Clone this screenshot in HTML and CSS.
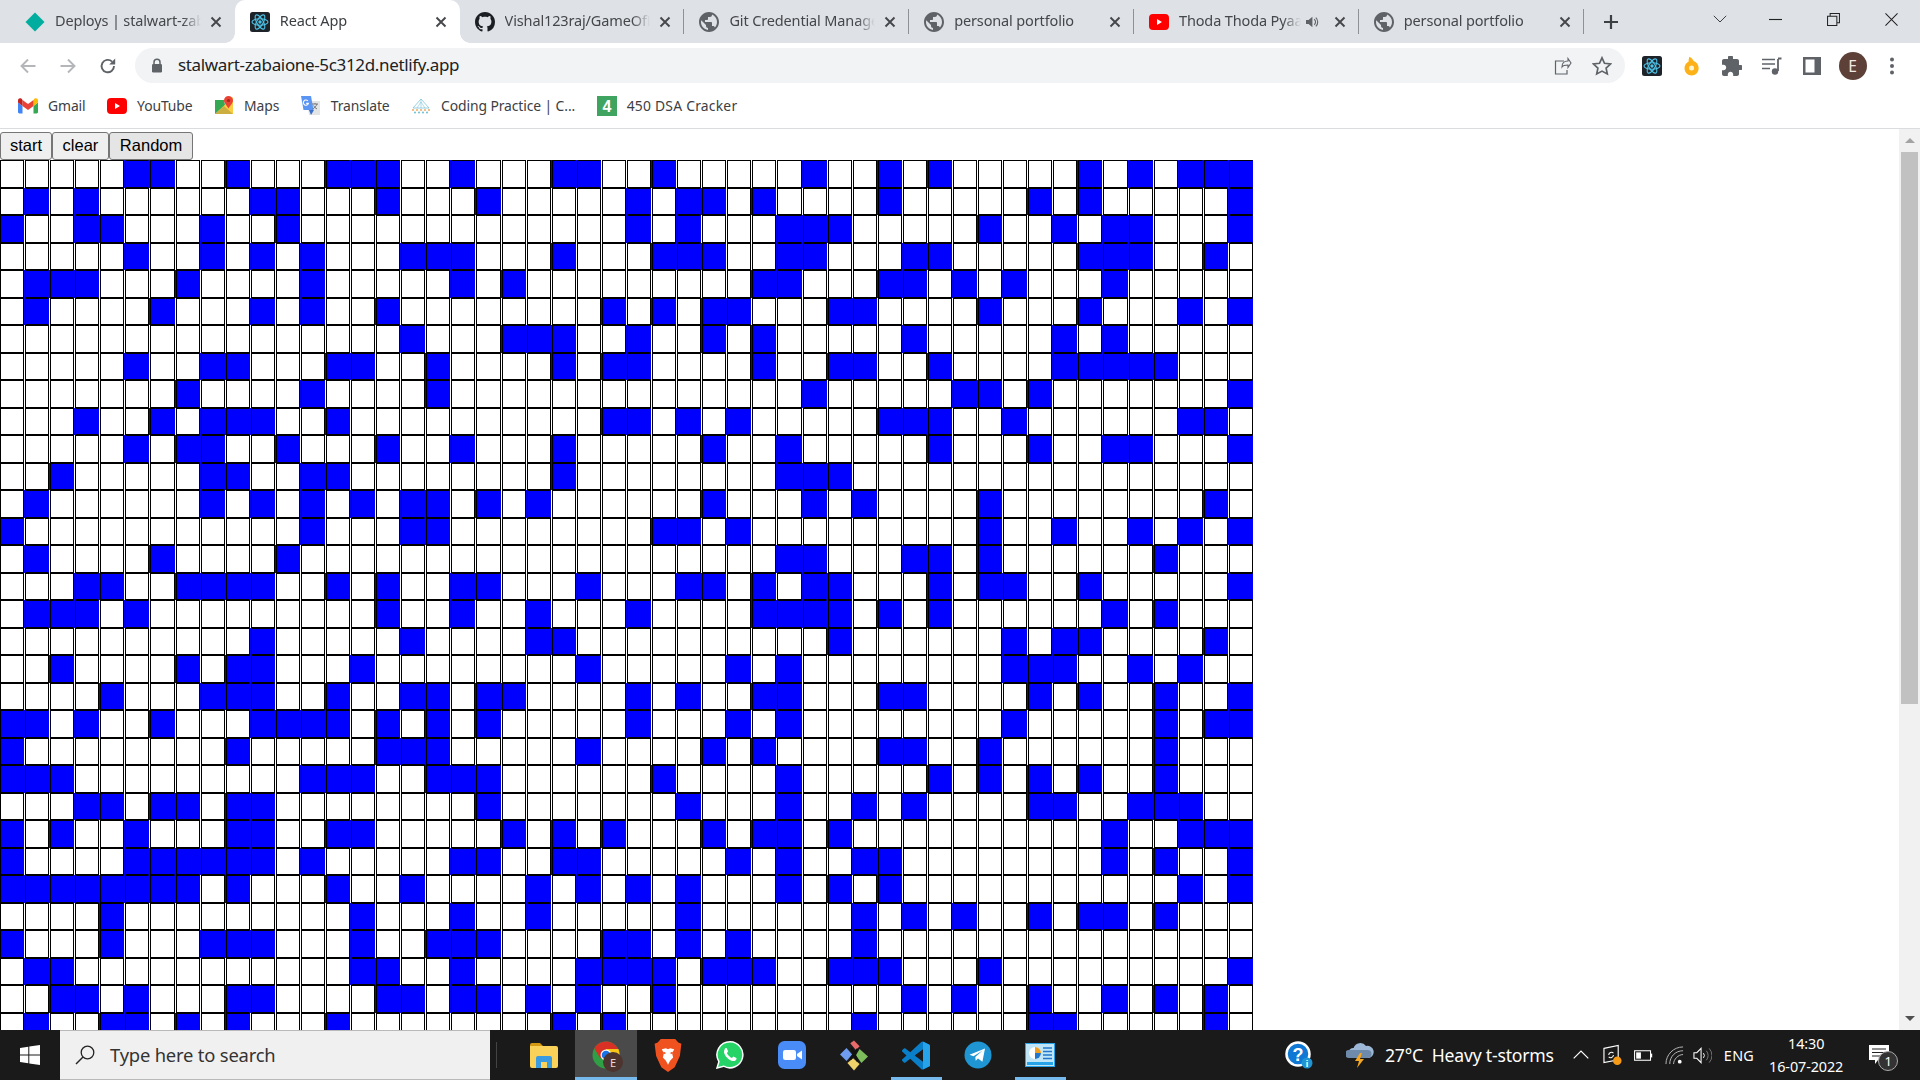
FILE: index.html
```html
<!DOCTYPE html>
<html lang="en">
<head>
<meta charset="utf-8">
<title>React App</title>
<link rel="stylesheet" href="styles.css">
</head>
<body>
<svg class="defs" aria-hidden="true">
  <symbol id="i-close" viewBox="0 0 12 12"><path d="M1.5 1.5l9 9M10.5 1.5l-9 9" fill="none" stroke="currentColor" stroke-width="1.9"/></symbol>
  <symbol id="i-globe" viewBox="2 2 20 20"><path fill="#5f6368" d="M12 2C6.48 2 2 6.48 2 12s4.48 10 10 10 10-4.48 10-10S17.52 2 12 2zm-1 17.93c-3.95-.49-7-3.85-7-7.93 0-.62.08-1.21.21-1.79L9 15v1c0 1.1.9 2 2 2v1.93zm6.9-2.54c-.26-.81-1-1.39-1.9-1.39h-1v-3c0-.55-.45-1-1-1H8v-2h2c.55 0 1-.45 1-1V7h2c1.1 0 2-.9 2-2v-.41c2.93 1.19 5 4.06 5 7.41 0 2.08-.8 3.97-2.1 5.39z"/></symbol>
  <symbol id="i-yt" viewBox="0 0 20 16"><rect width="20" height="16" rx="4" fill="#f00"/><path d="M8 5l5 3-5 3z" fill="#fff"/></symbol>
  <symbol id="i-react" viewBox="0 0 20 20"><rect width="20" height="20" rx="2.5" fill="#1d2329"/><g fill="none" stroke="#4fc3e8" stroke-width="1.1"><ellipse cx="10" cy="10" rx="8" ry="3.2"/><ellipse cx="10" cy="10" rx="8" ry="3.2" transform="rotate(60 10 10)"/><ellipse cx="10" cy="10" rx="8" ry="3.2" transform="rotate(120 10 10)"/></g><circle cx="10" cy="10" r="1.7" fill="#4fc3e8"/></symbol>
</svg>

<div class="tabstrip">
  <div class="tab no-sep">
    <svg class="fav" viewBox="0 0 20 20"><path d="M10 .5L19.5 10 10 19.5.5 10z" fill="#00ad9f"/></svg>
    <span class="tab-title">Deploys | stalwart-zabaione-5c312d</span>
    <svg class="tab-x"><use href="#i-close"/></svg>
  </div>
  <div class="tab active no-sep">
    <svg class="fav"><use href="#i-react"/></svg>
    <span class="tab-title">React App</span>
    <svg class="tab-x"><use href="#i-close"/></svg>
  </div>
  <div class="tab">
    <svg class="fav" viewBox="0 0 16 16"><path fill="#1b1f23" d="M8 0C3.58 0 0 3.58 0 8c0 3.54 2.29 6.53 5.47 7.59.4.07.55-.17.55-.38 0-.19-.01-.82-.01-1.49-2.01.37-2.53-.49-2.69-.94-.09-.23-.48-.94-.82-1.13-.28-.15-.68-.52-.01-.53.63-.01 1.08.58 1.23.82.72 1.21 1.87.87 2.33.66.07-.52.28-.87.51-1.07-1.78-.2-3.64-.89-3.64-3.95 0-.87.31-1.59.82-2.15-.08-.2-.36-1.02.08-2.12 0 0 .67-.21 2.2.82.64-.18 1.32-.27 2-.27.68 0 1.36.09 2 .27 1.53-1.04 2.2-.82 2.2-.82.44 1.1.16 1.92.08 2.12.51.56.82 1.27.82 2.15 0 3.07-1.87 3.75-3.65 3.95.29.25.54.73.54 1.48 0 1.07-.01 1.93-.01 2.2 0 .21.15.46.55.38A8.013 8.013 0 0016 8c0-4.42-3.58-8-8-8z"/></svg>
    <span class="tab-title">Vishal123raj/GameOfLife</span>
    <svg class="tab-x"><use href="#i-close"/></svg>
  </div>
  <div class="tab">
    <svg class="fav"><use href="#i-globe"/></svg>
    <span class="tab-title">Git Credential Manager for Windows</span>
    <svg class="tab-x"><use href="#i-close"/></svg>
  </div>
  <div class="tab">
    <svg class="fav"><use href="#i-globe"/></svg>
    <span class="tab-title">personal portfolio</span>
    <svg class="tab-x"><use href="#i-close"/></svg>
  </div>
  <div class="tab">
    <svg class="fav"><use href="#i-yt"/></svg>
    <span class="tab-title audio-title">Thoda Thoda Pyaar</span>
    <svg class="tab-audio" viewBox="0 0 14 14"><path d="M1 5h2.6L7.4 1.8v10.4L3.6 9H1z" fill="#5f6368"/><path d="M9.2 4.2a3.6 3.6 0 010 5.6M10.8 2.6a6 6 0 010 8.8" fill="none" stroke="#5f6368" stroke-width="1.1"/></svg>
    <svg class="tab-x"><use href="#i-close"/></svg>
  </div>
  <div class="tab">
    <svg class="fav"><use href="#i-globe"/></svg>
    <span class="tab-title">personal portfolio</span>
    <svg class="tab-x"><use href="#i-close"/></svg>
  </div>
  <svg class="new-tab" viewBox="0 0 16 16"><path d="M8 1v14M1 8h14" stroke="#3c4043" stroke-width="2.2" fill="none"/></svg>
  <div class="tabstrip-fill"></div>
  <svg class="tab-search" viewBox="0 0 14 8"><path d="M.8.8L7 7l6.2-6.2" fill="none" stroke="#3c4043" stroke-width="1"/></svg>
  <div class="win-btn"><svg viewBox="0 0 14 14"><path d="M0 7h14" stroke="#222" stroke-width="1.2"/></svg></div>
  <div class="win-btn"><svg viewBox="0 0 14 14"><path d="M.6 3.4h10v10H.6zM3.4 3.2V.6h10v10h-2.8" fill="none" stroke="#222" stroke-width="1.1"/></svg></div>
  <div class="win-btn"><svg viewBox="0 0 14 14"><path d="M.5.5l13 13M13.5.5l-13 13" stroke="#222" stroke-width="1.1"/></svg></div>
</div>

<div class="toolbar">
  <div class="tool"><svg viewBox="0 0 18 18"><path d="M16.5 9H2.5M9 2.5L2.5 9 9 15.5" fill="none" stroke="#b4b6b9" stroke-width="1.9"/></svg></div>
  <div class="tool"><svg viewBox="0 0 18 18"><path d="M1.5 9h14M9 2.5L15.5 9 9 15.5" fill="none" stroke="#b4b6b9" stroke-width="1.9"/></svg></div>
  <div class="tool"><svg viewBox="0 0 18 18"><path d="M15 9a6.2 6.2 0 11-1.9-4.4" fill="none" stroke="#5f6368" stroke-width="1.9"/><path d="M16.2 1.4v6h-6z" fill="#5f6368"/></svg></div>
  <div class="omnibox">
    <svg class="lock" viewBox="0 0 12 15"><path d="M3 6V4.2a3 3 0 016 0V6" fill="none" stroke="#5f6368" stroke-width="1.5"/><rect x="1" y="6" width="10" height="8.5" rx="1.2" fill="#5f6368"/></svg>
    <span class="url">stalwart-zabaione-5c312d.netlify.app</span>
    <svg class="omni-icon share" viewBox="0 0 20 20"><path d="M10 11c0-4 2.500-6 6-6V2.500L19 7l-3 4.500V9c-3 0-5 .5-6 2z" fill="none" stroke="#5f6368" stroke-width="1.1"/><path d="M12 5H3.500v13H15v-4" fill="none" stroke="#5f6368" stroke-width="1.2"/></svg>
    <svg class="omni-icon" viewBox="0 0 20 20"><path d="M10 1.800l2.500 5.500 6 .7-4.400 4.100 1.200 5.900L10 15.100 4.700 18l1.200-5.900L1.500 8l6-.7z" fill="none" stroke="#5f6368" stroke-width="1.700"/></svg>
  </div>
  <div class="tool first-ext"><svg class="ext" viewBox="0 0 20 20"><use href="#i-react"/></svg></div>
  <div class="tool"><svg class="ext" viewBox="0 0 20 24"><path d="M7 1c2 1 4 3 5 5 3 1 6 4 6 9a8.500 8.500 0 01-17 0c0-4 2-7 5-8.500C6 5 6 3 7 1z" fill="#fbb117"/><circle cx="9.500" cy="14.500" r="3" fill="#fff3d0"/></svg></div>
  <div class="tool"><svg class="ext" viewBox="2 2 20 20"><path fill="#5f6368" d="M20.500 11H19V7c0-1.100-.9-2-2-2h-4V3.500a2.500 2.500 0 00-5 0V5H4c-1.100 0-2 .9-2 2v3.800h1.500c1.500 0 2.700 1.200 2.700 2.700S5 16.200 3.500 16.200H2V20c0 1.100.9 2 2 2h3.800v-1.500c0-1.500 1.200-2.700 2.700-2.700s2.700 1.200 2.700 2.700V22H17c1.100 0 2-.9 2-2v-4h1.500a2.500 2.500 0 000-5z"/></svg></div>
  <div class="tool"><svg class="ext" viewBox="0 0 20 20"><path d="M0 3.500h13M0 8h13M0 12.500h8" stroke="#5f6368" stroke-width="1.700"/><path d="M16 3v12" stroke="#5f6368" stroke-width="1.800"/><path d="M16 2.500h3.500" stroke="#5f6368" stroke-width="2"/><circle cx="13" cy="15.500" r="3.200" fill="#5f6368"/></svg></div>
  <div class="tool"><svg class="ext" viewBox="0 0 20 20"><path d="M1 1h18v18H1zM3.500 3.500v13h9v-13z" fill="#5f6368" fill-rule="evenodd"/></svg></div>
  <div class="tool"><span class="avatar">E</span></div>
  <div class="tool"><svg class="ext" viewBox="0 0 20 20"><circle cx="10" cy="3.500" r="2" fill="#5f6368"/><circle cx="10" cy="10" r="2" fill="#5f6368"/><circle cx="10" cy="16.500" r="2" fill="#5f6368"/></svg></div>
</div>

<div class="bookmarks">
  <div class="bm">
    <svg class="bm-ico" viewBox="0 0 20 16"><path d="M1.400 15.500h3.100V8L0 4.600v9.500c0 .8.600 1.400 1.400 1.400z" fill="#4285f4"/><path d="M15.500 15.500h3.100c.8 0 1.400-.6 1.400-1.400V4.600L15.500 8z" fill="#34a853"/><path d="M15.500 2v6L20 4.600V2.300c0-1.800-2-2.800-3.400-1.700z" fill="#fbbc04"/><path d="M4.500 8V2L10 6.100 15.500 2v6L10 12z" fill="#ea4335"/><path d="M0 2.300v2.300L4.500 8V2L3.400.6C2 -.5 0 .5 0 2.300z" fill="#c5221f"/></svg>
    <span>Gmail</span>
  </div>
  <div class="bm">
    <svg class="bm-ico"><use href="#i-yt"/></svg>
    <span>YouTube</span>
  </div>
  <div class="bm">
    <svg class="bm-ico tall" viewBox="0 0 20 20"><path d="M1 4l9 0 1 5-10 9z" fill="#34a853"/><path d="M1 18l9-8 9 8z" fill="#4285f4"/><path d="M1 18L19 1v17z" fill="#fbbc04" opacity=".75"/><path d="M14.500 0a4.500 4.500 0 014.500 4.500c0 3-3.200 5-4.500 8-1.300-3-4.500-5-4.500-8A4.500 4.500 0 0114.500 0z" fill="#ea4335"/><circle cx="14.500" cy="4.500" r="1.600" fill="#a52714"/></svg>
    <span>Maps</span>
  </div>
  <div class="bm">
    <svg class="bm-ico tall" viewBox="0 0 20 20"><path d="M6 5h13v14H8z" fill="#e2e4e6"/><path d="M1 0h10l2.500 14H3.500z" fill="#5a95f3" transform="translate(-1 0)"/><path d="M11 8h6M14 7v1M16 8c-.5 2-2.500 4-4.500 5M12.500 9.500c.8 1.500 2 2.800 3.500 3.500" fill="none" stroke="#6b6e72" stroke-width=".9"/><path d="M6.800 4.800a2.600 2.600 0 10.600 2.600H5.200" fill="none" stroke="#fff" stroke-width="1.100"/><path d="M8 14l2 5 3-5z" fill="#3a6fc9"/></svg>
    <span>Translate</span>
  </div>
  <div class="bm">
    <svg class="bm-ico" viewBox="0 0 20 16"><path d="M10 1L2 10h16z" fill="none" stroke="#7cc4d8" stroke-width=".8"/><path d="M10 4L6 10M10 4l4 6M10 1v9" stroke="#7cc4d8" stroke-width=".6"/><g fill="#f0a860"><circle cx="2" cy="12" r="1"/><circle cx="6" cy="12" r="1"/><circle cx="10" cy="12" r="1"/><circle cx="14" cy="12" r="1"/><circle cx="18" cy="12" r="1"/></g><g fill="#5bb8d0"><circle cx="4" cy="14.500" r=".9"/><circle cx="8" cy="14.500" r=".9"/><circle cx="12" cy="14.500" r=".9"/><circle cx="16" cy="14.500" r=".9"/></g></svg>
    <span>Coding Practice | C...</span>
  </div>
  <div class="bm bm-last">
    <svg class="bm-ico tall" viewBox="0 0 20 20"><rect width="20" height="20" fill="#3fa45f"/><text x="10" y="16" class="four">4</text></svg>
    <span>450 DSA Cracker</span>
  </div>
</div>

<div class="viewport">
  <main class="page">
    <div class="controls">
      <button class="btn">start</button><button class="btn">clear</button><button class="btn hover">Random</button>
    </div>
    <div class="grid" id="grid"></div>
  </main>
  <aside class="scrollbar">
    <svg class="arrow" viewBox="0 0 10 5"><path d="M5 0l5 5H0z" fill="#a3a3a3"/></svg>
    <div class="thumb"></div>
    <div class="track-fill"></div>
    <svg class="arrow" viewBox="0 0 10 5"><path d="M0 0h10L5 5z" fill="#505050"/></svg>
  </aside>
</div>

<footer class="taskbar">
  <div class="start">
    <svg viewBox="0 0 20 20"><path d="M0 2.900l8.300-1.200v7.700H0zM9.300 1.500L20 0v9.400H9.300zM0 10.500h8.300v7.800L0 17.100zM9.300 10.500H20V20L9.300 18.500z" fill="#fff"/></svg>
  </div>
  <div class="search">
    <svg viewBox="0 0 20 20"><circle cx="12.500" cy="7.500" r="6.300" fill="none" stroke="#222" stroke-width="1.300"/><path d="M8 12L1 19" stroke="#222" stroke-width="1.500"/></svg>
    <span>Type here to search</span>
  </div>
  <div class="task-sep"></div>
  <div class="slot">
    <svg class="app" viewBox="0 0 28 26"><path d="M0 3a2 2 0 012-2h8l3 3h-13z" fill="#d59a12"/><path d="M0 4h26a2 2 0 012 2v18a2 2 0 01-2 2H2a2 2 0 01-2-2z" fill="#fbd259"/><path d="M6 26V16a2 2 0 012-2h12a2 2 0 012 2v10h-5v-6h-6v6z" fill="#3a9be0"/></svg>
  </div>
  <div class="slot running">
    <svg class="app" viewBox="0 0 28 28"><circle cx="14" cy="14" r="13.500" fill="#2f9e44"/><path d="M14 .5A13.500 13.500 0 002.300 7.300L8 17l6-3h13.500A13.500 13.500 0 0014 .5z" fill="#d93025"/><path d="M14 8h12.400a13.500 13.500 0 011.100 6c0 5-2.700 9.400-6.800 11.700L14 14z" fill="#f5c518"/><circle cx="14" cy="14" r="5.500" fill="#fff"/><circle cx="14" cy="14" r="4.300" fill="#1a73e8"/></svg>
    <span class="badge">E</span>
  </div>
  <div class="slot">
    <svg class="app tall" viewBox="0 0 26 32"><path d="M6 0h14l3 3.500 3 1-1.500 12-5 11L13 32l-6.500-4.500-5-11L0 4.500l3-1z" fill="#f0521f"/><path d="M7 10l4-1 2 1 2-1 4 1-2 4 1 4-3 3-2 4-2-4-3-3 1-4z" fill="#fff"/><path d="M10.500 14l-2-1M15.500 14l2-1" stroke="#f0521f" stroke-width="1.500"/></svg>
  </div>
  <div class="slot">
    <svg class="app" viewBox="0 0 28 28"><path d="M14 .8A13 13 0 002.900 20.600L1 27l6.600-1.800A13 13 0 1014 .8z" fill="#25d366" stroke="#fff" stroke-width="1.500"/><path d="M9.500 7.500c-1.500 1-2 3-1 5.500 1.300 3 4 5.700 7 6.800 2.300.8 4 0 4.800-1.400.3-.6.300-1.300.1-1.500l-3-1.500-1.500 1.600c-2-.7-4-2.700-5-5l1.300-1.400-1.300-3.200c-.5-.5-1.700-.5-2.400.1z" fill="#fff"/></svg>
  </div>
  <div class="slot">
    <svg class="app" viewBox="0 0 28 28"><rect width="28" height="28" rx="6.500" fill="#4a8cf7"/><rect x="5" y="9" width="13" height="10" rx="2.200" fill="#fff"/><path d="M19 13l5-3.500v9L19 15z" fill="#fff"/></svg>
  </div>
  <div class="slot">
    <svg class="app tall" viewBox="0 0 30 32"><path d="M11 3l4-3 6 6-4 4z" fill="#e96a6a"/><path d="M0 15l7-7 6 7-6 7z" fill="#6f9cf0"/><path d="M21 9l9 8-7 7-6-8z" fill="#7dbd5c"/><path d="M8 24l6-5 7 6-6 7z" fill="#f0d36a"/><path d="M12 8l7 14M19 9l-8 11" stroke="#111" stroke-width="2.600"/></svg>
  </div>
  <div class="slot running narrow">
    <svg class="app tall" viewBox="0 0 24 24"><path fill="#0a7fc9" d="M23.150 2.587L18.210.21a1.494 1.494 0 00-1.705.29l-9.460 8.630-4.120-3.128a.999.999 0 00-1.276.057L.327 7.261A1 1 0 00.326 8.740L3.899 12 .326 15.260a1 1 0 00.001 1.479L1.650 17.940a.999.999 0 001.276.057l4.120-3.128 9.460 8.630a1.492 1.492 0 001.704.29l4.942-2.377A1.500 1.500 0 0024 20.060V3.939a1.500 1.500 0 00-.85-1.352zm-5.146 14.861L10.826 12l7.178-5.448v10.896z"/><path fill="#27a3ea" d="M18 .1l5.150 2.487A1.500 1.500 0 0124 3.939V20.060a1.500 1.500 0 01-.85 1.352L18 23.900z"/></svg>
  </div>
  <div class="slot">
    <svg class="app" viewBox="0 0 28 28"><circle cx="14" cy="14" r="13.500" fill="#1f96d3"/><path d="M5.500 13.800l15.500-6.300-2.600 13.300-4.400-3.200-2.300 2.100-.4-3.700 7-6.200-8.800 5.400z" fill="#fff"/></svg>
  </div>
  <div class="slot running narrow cpanel">
    <svg class="app wide" viewBox="0 0 30 24"><rect x=".5" y=".5" width="29" height="23" fill="#bfe5f7" stroke="#27a3ea"/><rect x="2" y="19" width="26" height="3" fill="#27a3ea"/><circle cx="10" cy="10" r="6" fill="#fff"/><path d="M10 10V4a6 6 0 016 6z" fill="#f0a020"/><path d="M10 10h6a6 6 0 01-6 6z" fill="#2277cc"/><path d="M18 5h9M18 8.500h9M18 12h9M18 15.500h9" stroke="#2277cc" stroke-width="1.300"/></svg>
  </div>
  <div class="tray">
    <svg class="help" viewBox="0 0 28 28"><circle cx="13" cy="13" r="11.500" fill="#0f78d4" stroke="#fff" stroke-width="2.500"/><text x="13" y="20" class="help-q">?</text><circle cx="22" cy="22" r="5.500" fill="#1f96d3"/><text x="22" y="25.500" class="help-i">i</text></svg>
    <svg class="weather" viewBox="0 0 28 28"><path d="M7 17a5 5 0 01.600-10A7 7 0 0120 5a6 6 0 013 12z" fill="#9db8d6"/><path d="M3 17a4 4 0 01.500-8h18a4 4 0 010 8z" fill="#6f8bac"/><path d="M14 12l-5 8h4l-2 7 7-9h-4l2-6z" fill="#f5a623"/></svg>
    <span class="weather-text">27°C&nbsp; Heavy t-storms</span>
    <svg class="caret" viewBox="0 0 16 9"><path d="M.7 8.300L8 1l7.300 7.300" fill="none" stroke="#fff" stroke-width="1.200"/></svg>
    <svg class="tray-ico sync" viewBox="0 0 20 22"><path d="M1 4l15-3v15l-15 3z" fill="none" stroke="#fff" stroke-width="1.200"/><path d="M6 11a3 3 0 015-2M11 11a3 3 0 01-5 2" fill="none" stroke="#fff" stroke-width="1.100"/><circle cx="15" cy="17" r="4.500" fill="#f79a16"/></svg>
    <svg class="tray-ico" viewBox="0 0 20 12"><rect x=".6" y="1" width="16.800" height="10" fill="none" stroke="#fff" stroke-width="1.100"/><rect x="2.300" y="2.700" width="5" height="6.600" fill="#fff"/><path d="M18.500 4v4" stroke="#fff" stroke-width="1.300"/></svg>
    <svg class="tray-ico" viewBox="0 0 20 20"><path d="M1 19C1 9 9 1 19 1M5 19c0-8 6-14 14-14M9 19c0-5 5-10 10-10" fill="none" stroke="#bdbdbd" stroke-width="1"/><circle cx="15.500" cy="16.500" r="2" fill="#fff"/></svg>
    <svg class="tray-ico vol" viewBox="0 0 20 20"><path d="M1 7h3l4.500-4.500v15L4 13H1z" fill="none" stroke="#fff" stroke-width="1.100"/><path d="M11 7.500a4 4 0 010 5" fill="none" stroke="#fff" stroke-width="1"/><path d="M14 5a7.500 7.500 0 010 10M17 2.500a11 11 0 010 15" fill="none" stroke="#777" stroke-width="1"/></svg>
    <span class="lang">ENG</span>
    <div class="clock"><span>14:30</span><span>16-07-2022</span></div>
    <div class="notify">
      <svg viewBox="0 0 20 20"><path d="M0 0h20v15H9l-3 4v-4H0z" fill="#fff"/><path d="M3 4h14M3 7.500h14M3 11h10" stroke="#222" stroke-width="1.200"/></svg>
      <span class="notify-count">1</span>
    </div>
  </div>
</footer>
<script src="grid.js"></script>
</body>
</html>
```

FILE: styles.css
```css
* { box-sizing: border-box; }
html, body { margin: 0; height: 100%; }
body {
  display: flex;
  flex-direction: column;
  height: 1080px;
  overflow: hidden;
  background: #fff;
  font-family: "Noto Sans", "Open Sans", sans-serif;
}
.defs { width: 0; height: 0; position: absolute; }

/* tab strip */
.tabstrip {
  display: flex;
  align-items: center;
  flex: none;
  height: 43px;
  padding-left: 10px;
  background: #dee1e6;
}
.tab {
  position: relative;
  display: flex;
  align-items: center;
  flex: none;
  width: 224.8px;
  height: 43px;
  padding: 0 9px 0 15px;
  color: #45474a;
}
.tab::after {
  content: "";
  position: absolute;
  right: 0;
  top: 9px;
  width: 1px;
  height: 25px;
  background: #8e9196;
}
.tab.no-sep::after { display: none; }
.tab.active {
  background: #fff;
  border-radius: 10px 10px 0 0;
  color: #3c4043;
}
.tab.active::before, .tab.active::after {
  content: "";
  display: block;
  position: absolute;
  top: auto;
  bottom: 0;
  width: 10px;
  height: 10px;
  background: radial-gradient(circle at 0 0, transparent 9.5px, #fff 10px);
}
.tab.active::before { left: -10px; }
.tab.active::after {
  right: -10px;
  background: radial-gradient(circle at 100% 0, transparent 9.5px, #fff 10px);
}
.fav { flex: none; width: 20px; height: 20px; }
.tab-title {
  flex: 1;
  min-width: 0;
  margin: 0 5px 3px 10px;
  overflow: hidden;
  white-space: nowrap;
  font-size: 14.5px;
  letter-spacing: -.14px;
  -webkit-mask-image: linear-gradient(to right, #000 calc(100% - 18px), transparent);
  mask-image: linear-gradient(to right, #000 calc(100% - 18px), transparent);
}
.tab-title.audio-title { margin-right: 4px; }
.tab-audio { flex: none; width: 14px; height: 14px; margin-right: 11px; }
.tab-x { flex: none; width: 20px; height: 12px; color: #45474a; }
.new-tab { flex: none; width: 16px; height: 16px; margin-left: 19px; }
.tabstrip-fill { flex: 1; }
.tab-search { flex: none; width: 14px; height: 8px; margin: 0 19px 5px 0; align-self: center; }
.win-btn {
  display: flex;
  align-items: center;
  justify-content: center;
  flex: none;
  width: 58px;
  height: 38px;
  align-self: flex-start;
}
.win-btn svg { width: 13px; height: 13px; }

/* toolbar */
.toolbar {
  display: flex;
  align-items: center;
  flex: none;
  height: 45px;
  padding-left: 8px;
}
.tool {
  display: flex;
  align-items: center;
  justify-content: center;
  flex: none;
  width: 40px;
  height: 36px;
}
.tool > svg { width: 18px; height: 18px; }
.tool > svg.ext { width: 20px; height: 20px; }
.first-ext { margin-left: 7px; }
.omnibox {
  display: flex;
  align-items: center;
  flex: none;
  width: 1490px;
  height: 35px;
  margin-left: 7px;
  padding: 0 13px 0 16px;
  border-radius: 18px;
  background: #f1f3f4;
}
.lock { flex: none; width: 12px; height: 15px; }
.url {
  flex: 1;
  margin: 0 0 2px 15px;
  font-size: 17px;
  letter-spacing: -.34px;
  color: #202124;
  white-space: nowrap;
}
.omni-icon { flex: none; width: 20px; height: 20px; margin-left: 20px; }
.avatar {
  display: flex;
  align-items: center;
  justify-content: center;
  width: 28px;
  height: 28px;
  margin-left: 1px;
  border-radius: 50%;
  background: #5d4037;
  color: #f1e9e4;
  font-size: 15.5px;
}

/* bookmarks */
.bookmarks {
  display: flex;
  align-items: center;
  gap: 21.5px;
  flex: none;
  height: 41px;
  padding: 0 0 5px 18px;
  border-bottom: 1px solid #dadce0;
  font-size: 13.9px;
  color: #3c4043;
}
.bm { display: flex; align-items: center; gap: 10px; flex: none; letter-spacing: -.1px; white-space: nowrap; }
.bm-last { letter-spacing: .22px; }
.bm-ico { flex: none; width: 20px; height: 16px; }
.bm-ico.tall { height: 20px; }
.four { font: bold 16px "Liberation Sans", sans-serif; fill: #fff; text-anchor: middle; }

/* page */
.viewport { display: flex; flex: 1; min-height: 0; }
.page { flex: 1; min-width: 0; overflow: hidden; }
.controls { display: flex; height: 31px; padding-top: 3px; }
.btn {
  flex: none;
  height: 28px;
  padding: 0 9.5px 2px;
  border: 1px solid #767676;
  border-radius: 3px;
  background: #efefef;
  color: #000;
  font: 16.5px/1 "Liberation Sans", sans-serif;
}
.btn:first-child { padding: 0 9px 2px; }
.btn.hover { padding: 0 10px 2px; background: #e5e5e5; }
.grid {
  display: grid;
  grid-template-columns: repeat(50, 24.08px);
  column-gap: 1px;
  grid-auto-rows: 27.5px;
  width: 1253px;
}
.cell { border: 1px solid #000; background: #fff; }
.cell.on {
  border-right-color: #00f;
  background: #00f;
  box-shadow: -1px 0 0 #00f;
}
.scrollbar {
  display: flex;
  flex-direction: column;
  align-items: center;
  flex: none;
  width: 21px;
  padding: 0 2px;
  background: #f1f1f1;
}
.arrow { flex: none; width: 10px; height: 5px; margin: 9px 0; }
.thumb { flex: none; width: 17px; height: 552px; background: #c1c1c1; }
.track-fill { flex: 1; }

/* taskbar */
.taskbar {
  display: flex;
  align-items: center;
  flex: none;
  height: 50px;
  background: #1a1a1a;
  color: #fff;
}
.start { display: flex; align-items: center; justify-content: center; flex: none; width: 60px; height: 50px; }
.start svg { width: 20px; height: 20px; }
.search {
  display: flex;
  align-items: center;
  flex: none;
  width: 430px;
  height: 50px;
  padding-left: 15px;
  background: #f0f0f0;
  border: 1px solid #b9b9b9;
  border-width: 1px 0;
  color: #333;
  font-size: 18.4px;
}
.search svg { flex: none; width: 20px; height: 20px; }
.search span { margin: 0 0 2px 15px; letter-spacing: -.2px; }
.task-sep { flex: none; width: 23px; height: 26px; margin: 0 -6px 0 6px; border-left: 1px solid #444; }
.slot {
  position: relative;
  display: flex;
  align-items: center;
  justify-content: center;
  flex: none;
  width: 62px;
  height: 50px;
}
.app { width: 28px; height: 28px; }
.app.tall { width: 28px; height: 33px; }
.app.wide { width: 30px; height: 24px; }
.slot.running::after {
  content: "";
  position: absolute;
  left: 0;
  right: 0;
  bottom: 0;
  height: 3px;
  background: #76b9ed;
}
.slot.narrow::after { left: 6px; right: 5px; }
.slot.running:not(.narrow) { background: #4a4a4a; }
.badge {
  position: absolute;
  left: 28px;
  top: 22px;
  display: flex;
  align-items: center;
  justify-content: center;
  width: 20px;
  height: 20px;
  border-radius: 50%;
  background: #4e342e;
  color: #e7dcd8;
  font-size: 11px;
}
.tray {
  display: flex;
  align-items: center;
  flex: 1;
  height: 50px;
  padding-left: 214px;
}
.help { flex: none; width: 28px; height: 28px; }
.help-q { font: bold 18px "Liberation Sans", sans-serif; fill: #fff; text-anchor: middle; }
.help-i { font: bold 9px "Liberation Sans", sans-serif; fill: #fff; text-anchor: middle; }
.weather { flex: none; width: 28px; height: 28px; margin-left: 33px; }
.weather-text { flex: none; margin-left: 11px; font-size: 17.6px; letter-spacing: -.2px; white-space: nowrap; }
.caret { flex: none; width: 16px; height: 9px; margin-left: 19px; margin-bottom: 2px; }
.tray-ico { flex: none; width: 19px; height: 19px; margin-left: 12px; }
.tray-ico.sync { width: 19px; height: 22px; margin-left: 14px; }
.tray-ico.vol { margin-left: 9px; }
.lang { flex: none; margin-left: 12px; font-size: 14.4px; letter-spacing: .3px; }
.clock {
  display: flex;
  flex-direction: column;
  align-items: center;
  flex: none;
  width: 76px;
  margin-left: 14px;
  font-size: 14.4px;
  line-height: 23px;
  letter-spacing: -.1px;
}
.notify { position: relative; flex: none; width: 20px; height: 20px; margin-left: 25px; }
.notify svg { display: block; width: 20px; height: 20px; }
.notify-count {
  position: absolute;
  left: 9px;
  top: 6px;
  display: flex;
  align-items: center;
  justify-content: center;
  width: 20px;
  height: 20px;
  border: 1px solid #aaa;
  border-radius: 50%;
  background: #333;
  font-size: 13px;
}
```

FILE: grid.js
```js
var BLUE = [
  [5,6,9,13,14,15,18,22,23,26,32,35,37,43,45,47,48,49],
  [1,3,10,11,15,19,25,27,28,30,35,41,43,49],
  [0,3,4,8,11,25,27,31,32,33,39,42,44,45,49],
  [5,8,10,12,16,17,18,22,26,27,28,31,32,36,37,43,44,45,48],
  [1,2,3,7,12,18,20,30,31,35,36,38,40,44],
  [1,6,10,12,15,24,26,28,29,33,34,39,43,47,49],
  [16,20,21,22,25,28,30,36,42,44],
  [5,8,9,13,14,17,22,24,25,30,33,34,37,42,43,44,45,46],
  [7,12,17,32,38,39,41,49],
  [3,6,8,9,10,13,24,25,27,29,35,36,37,40,47,48],
  [5,7,8,11,15,18,22,28,31,37,41,44,45,49],
  [2,8,9,12,13,22,31,32,33],
  [1,8,10,12,14,16,17,19,21,28,32,34,39,48],
  [0,12,16,17,26,27,29,39,42,45,47,49],
  [1,6,11,31,32,36,37,39,46],
  [3,4,7,8,9,10,13,15,18,19,23,27,28,30,32,33,37,39,40,43,49],
  [1,2,3,5,15,18,21,25,30,31,32,33,35,37,44,46],
  [10,16,21,22,33,40,42,43,48],
  [2,7,9,10,14,23,29,31,40,41,42,45,47],
  [4,8,9,10,13,16,17,19,20,25,27,30,31,35,36,41,43,46,49],
  [0,1,3,6,10,11,12,13,15,17,19,25,29,31,40,46,48,49],
  [0,9,15,16,17,23,28,30,35,36,39,46],
  [0,1,2,12,13,14,17,18,19,26,31,37,39,41,43,46],
  [3,4,6,7,9,10,19,27,31,34,36,41,42,45,46,47],
  [0,2,5,9,10,13,14,20,22,24,28,30,31,33,44,47,48,49],
  [0,5,6,7,8,9,10,12,18,19,22,23,29,31,34,35,44,46,49],
  [0,1,2,3,4,5,6,7,9,13,16,21,23,25,27,31,33,35,47,49],
  [4,14,18,21,27,34,36,38,41,43,44,46],
  [0,4,8,9,10,14,17,18,19,24,25,27,29,34],
  [1,2,14,15,18,23,24,25,26,28,29,30,33,34,35,39,49],
  [2,3,5,9,10,15,16,18,19,21,23,26,36,38,41,44,46,48],
  [1,4,5,7,9,13,22,24,34,41,42,48]
];
var grid = document.getElementById("grid");
BLUE.forEach(function (row) {
  for (var c = 0; c < 50; c++) {
    var cell = document.createElement("div");
    cell.className = row.indexOf(c) >= 0 ? "cell on" : "cell";
    grid.appendChild(cell);
  }
});
```
